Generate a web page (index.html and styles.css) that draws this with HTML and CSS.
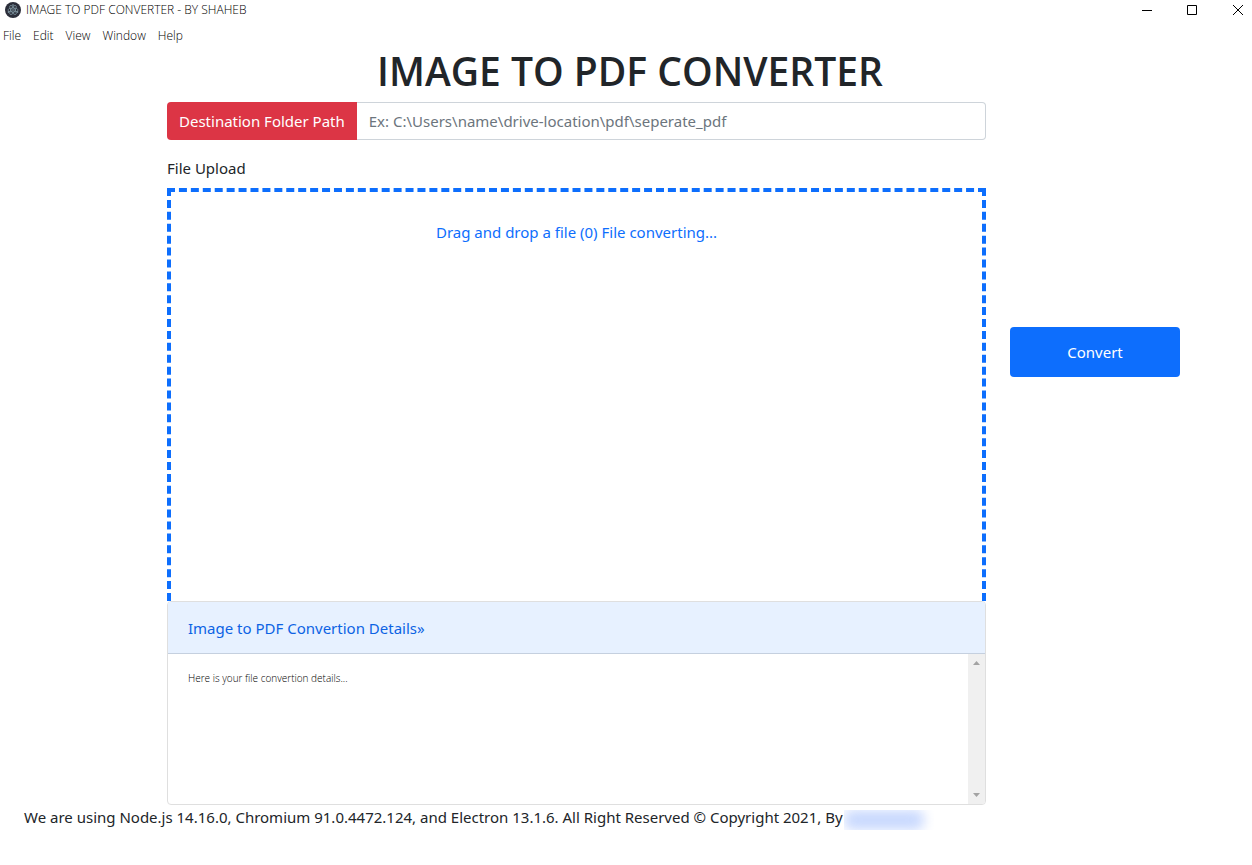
FILE: index.html
```html
<!DOCTYPE html>
<html lang="en">
<head>
<meta charset="utf-8">
<title>IMAGE TO PDF CONVERTER - BY SHAHEB</title>
<link rel="stylesheet" href="styles.css">
</head>
<body>
<header class="titlebar">
  <svg class="app-icon" viewBox="0 0 16 16" width="16" height="16" aria-hidden="true">
    <circle cx="8" cy="8" r="8" fill="#2b2e3a"/>
    <g fill="none" stroke="#8fa9b4" stroke-width=".6">
      <ellipse cx="8" cy="8" rx="5.2" ry="2"/>
      <ellipse cx="8" cy="8" rx="5.2" ry="2" transform="rotate(60 8 8)"/>
      <ellipse cx="8" cy="8" rx="5.2" ry="2" transform="rotate(120 8 8)"/>
    </g>
    <g fill="#9fbac4"><circle cx="8" cy="8" r=".7"/><circle cx="3.4" cy="10" r=".7"/><circle cx="12.6" cy="10" r=".7"/><circle cx="8" cy="3" r=".7"/></g>
  </svg>
  <span class="window-title">IMAGE TO PDF CONVERTER - BY SHAHEB</span>
  <div class="window-controls">
    <button type="button" aria-label="Minimize"><svg width="10" height="10" viewBox="0 0 10 10"><path d="M0 5.5H10" stroke="#000"/></svg></button>
    <button type="button" aria-label="Maximize"><svg width="10" height="10" viewBox="0 0 10 10"><path d="M.5.5h9v9h-9z" fill="none" stroke="#000"/></svg></button>
    <button type="button" aria-label="Close"><svg width="10" height="10" viewBox="0 0 10 10"><path d="M0 0L10 10M10 0L0 10" stroke="#000"/></svg></button>
  </div>
</header>
<nav class="menubar">
  <button type="button">File</button>
  <button type="button">Edit</button>
  <button type="button">View</button>
  <button type="button">Window</button>
  <button type="button">Help</button>
</nav>
<h1 class="heading">IMAGE TO PDF CONVERTER</h1>
<main class="layout">
  <div class="form">
    <div class="input-group">
      <label class="input-label" for="path">Destination Folder Path</label>
      <input class="input" id="path" type="text" placeholder="Ex: C:\Users\name\drive-location\pdf\seperate_pdf">
    </div>
    <p class="upload-label">File Upload</p>
    <div class="dropzone">Drag and drop a file (0) File converting...</div>
  </div>
  <button class="convert" type="button">Convert</button>
  <section class="details">
    <button class="details-header" type="button">Image to PDF Convertion Details»</button>
    <div class="details-body">
      <p class="details-text">Here is your file convertion details...</p>
      <div class="scrollbar" aria-hidden="true">
        <svg width="7" height="4" viewBox="0 0 7 4"><path d="M0 4L3.5 0L7 4z" fill="#a3a3a3"/></svg>
        <svg width="7" height="4" viewBox="0 0 7 4"><path d="M0 0L3.5 4L7 0z" fill="#a3a3a3"/></svg>
      </div>
    </div>
  </section>
</main>
<footer class="footer">
  <span>We are using Node.js 14.16.0, Chromium 91.0.4472.124, and Electron 13.1.6. All Right Reserved © Copyright 2021, By</span>
  <span class="author"><span class="author-blur"></span></span>
</footer>
</body>
</html>
```
FILE: styles.css
```css
* { box-sizing: border-box; }
body {
  margin: 0;
  background: #fff;
  color: #212529;
  font: 15px/24px "Noto Sans", "Open Sans", sans-serif;
}
p { margin: 0; }
button { font: inherit; border: 0; background: none; padding: 0; }

.titlebar {
  display: flex;
  align-items: center;
  height: 20px;
  padding-left: 5px;
  color: #000;
  font-family: "Open Sans", sans-serif;
  font-size: 12px;
  font-weight: 300;
}
.window-title { margin-left: 5px; }
.window-controls {
  display: flex;
  gap: 35px;
  margin-left: auto;
  padding-right: 10px;
}
.window-controls button {
  display: flex;
  align-items: center;
  height: 20px;
}
.window-controls button:last-child { padding-left: 1px; margin-right: -1px; }

.menubar {
  display: flex;
  gap: 12px;
  height: 30px;
  padding: 4px 3px 0;
  font-family: "Open Sans", sans-serif;
  font-size: 12px;
  font-weight: 300;
}
.menubar button { color: #000; height: 24px; }

.heading {
  margin: 0;
  padding: 0 0 6px 8px;
  font-family: "Open Sans", sans-serif;
  font-size: 39px;
  font-weight: 600;
  line-height: 42px;
  text-align: center;
}
.layout {
  display: grid;
  grid-template-columns: 119fr 819fr 170fr 48fr;
  column-gap: 24px;
  align-items: center;
  padding: 4px 0 0 24px;
}
.form { grid-column: 2; min-width: 0; }
.input-group { display: flex; height: 38px; margin-bottom: 16px; }
.input-label {
  padding: 7px 12px;
  border-radius: 4px 0 0 4px;
  background: #dc3545;
  color: #fff;
  white-space: nowrap;
}
.input {
  flex: 1;
  min-width: 0;
  padding: 6px 12px;
  border: 1px solid #ced4da;
  border-left: 0;
  border-radius: 0 4px 4px 0;
  background: #fff;
  font: inherit;
}
.input::placeholder { color: #6c757d; opacity: 1; }
.upload-label { margin-bottom: 8px; }
.dropzone {
  min-height: 413px;
  padding: 28px;
  border: 4px dashed #0d6efd;
  border-bottom: 0;
  color: #0d6efd;
  text-align: center;
}
.convert {
  height: 50px;
  border-radius: 4px;
  background: #0d6efd;
  color: #fff;
}
.details {
  grid-column: 2;
  border: 1px solid #dfdfdf;
  border-radius: 4px;
  overflow: hidden;
}
.details-header {
  display: block;
  width: 100%;
  height: 52px;
  padding: 0 20px;
  border-bottom: 1px solid #c5d0df;
  background: #e7f1ff;
  color: #0c63e4;
  text-align: left;
}
.details-body { display: flex; justify-content: space-between; min-height: 150px; }
.details-text {
  padding: 12px 20px;
  color: #000;
  font-family: "Open Sans", sans-serif;
  font-size: 10px;
  font-weight: 300;
}
.scrollbar {
  display: flex;
  flex-direction: column;
  align-items: center;
  justify-content: space-between;
  width: 17px;
  padding: 7px 0;
  background: #f0f0f0;
}
.footer { display: flex; padding: 0 24px; }
.author { width: 90px; height: 20px; margin: 5px 0 0 1px; overflow: hidden; }
.author-blur {
  display: block;
  width: 80px;
  height: 20px;
  border-radius: 8px;
  background: #c9d9fe;
  filter: blur(6px);
}
```
